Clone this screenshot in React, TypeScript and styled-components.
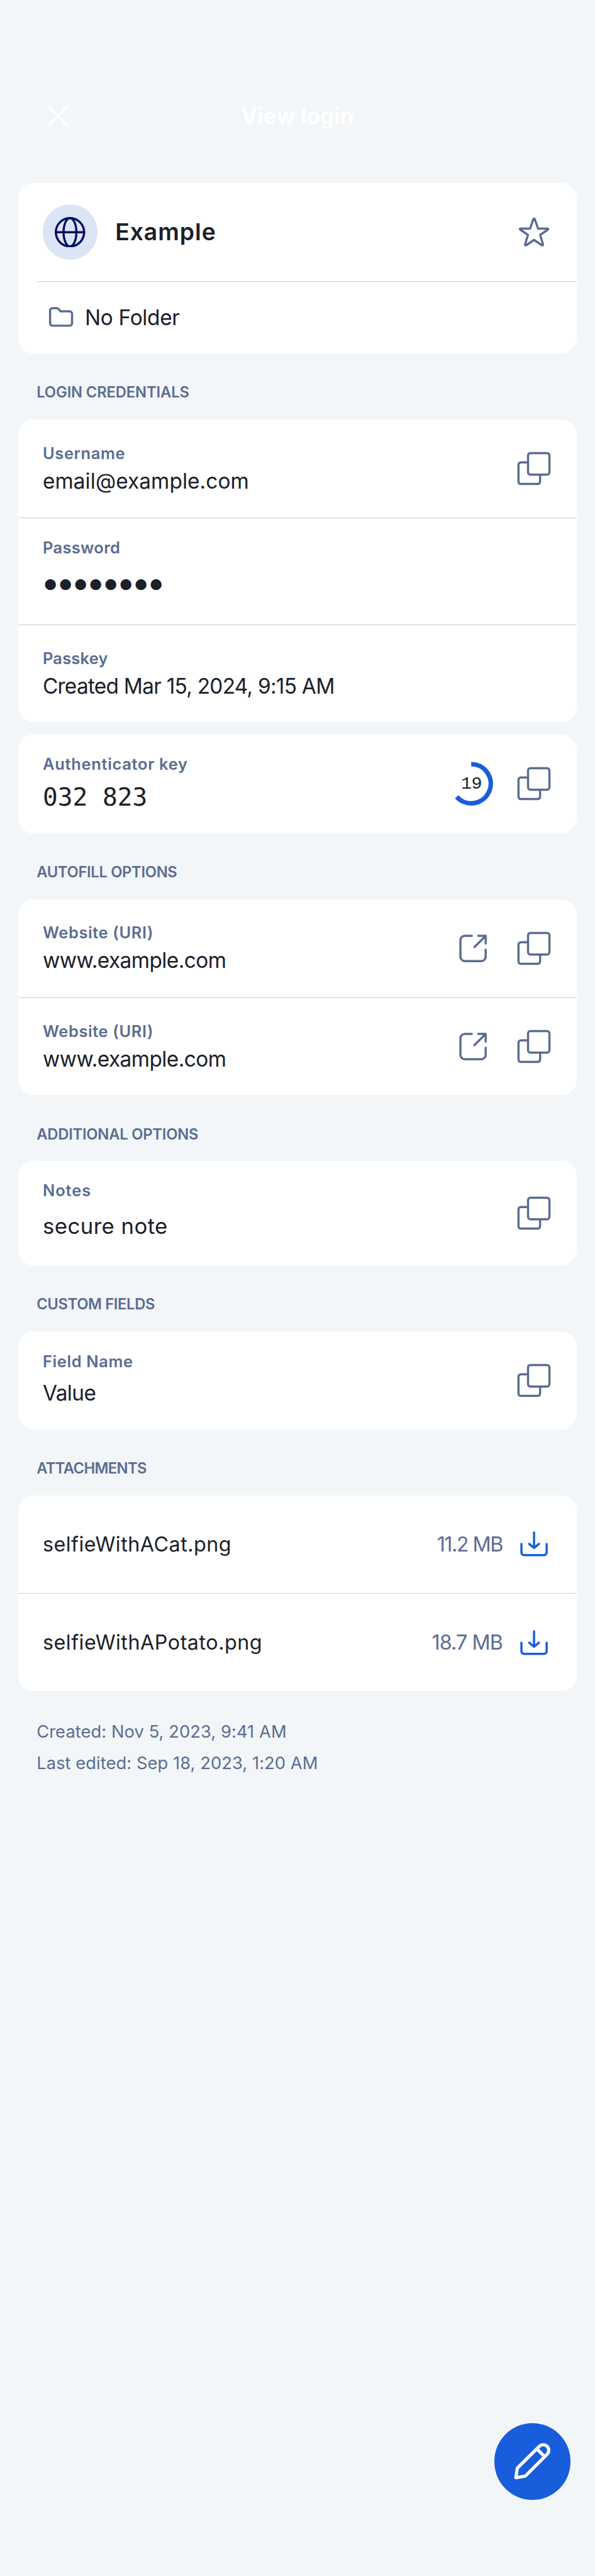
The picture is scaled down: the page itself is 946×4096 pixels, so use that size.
import React from "react";
import styled, { createGlobalStyle } from "styled-components";

/* Sizes are written in device pixels of a 1170px wide phone screen and scaled down. */
const SCALE = 0.8088;
const u = (n: number) => `${(n * SCALE).toFixed(2)}px`;

const color = {
  page: "#f2f6f9",
  card: "#ffffff",
  ink: "#1b2029",
  muted: "#5a6d91",
  blue: "#175ddc",
  navy: "#020f66",
  badge: "#dbe5f6",
  line: "#cfcfd1",
};

const GlobalStyle = createGlobalStyle`
  * { box-sizing: border-box; }
  html, body { margin: 0; background: ${color.page}; }
  body {
    font-family: Inter, "Liberation Sans", sans-serif;
    font-weight: 400;
    color: ${color.ink};
  }
`;

const Screen = styled.div`
  position: relative;
  height: 4096px;
  overflow: hidden;
  padding: 0 ${u(36)};
  background: ${color.page};
`;

const NavBar = styled.header`
  display: grid;
  grid-template-columns: 1fr auto 1fr;
  align-items: center;
  height: ${u(132)};
  margin: ${u(162)} 0 ${u(66)};
  padding: 0 ${u(55)};
  color: #ffffff;
`;

const NavTitle = styled.h1`
  margin: 0;
  font-size: ${u(43)};
  font-weight: 700;
  letter-spacing: 0.007em;
`;

const Icon = styled.svg<{ $size: number }>`
  display: block;
  flex: none;
  width: ${(p) => u(p.$size)};
  height: ${(p) => u(p.$size)};
  fill: none;
  stroke: currentColor;
  stroke-width: 4.3;
  stroke-linecap: round;
  stroke-linejoin: round;
`;

const Card = styled.section`
  margin-bottom: ${u(24)};
  border-radius: ${u(30)};
  background: ${color.card};
  overflow: hidden;

  &:has(+ h2),
  &:has(+ footer) {
    margin-bottom: 0;
  }
`;

const SectionTitle = styled.h2<{ $track: number }>`
  height: ${u(130)};
  margin: 0;
  padding: ${u(57.3)} 0 0 ${u(36)};
  font-size: ${u(29.4)};
  font-weight: 600;
  line-height: ${u(40)};
  letter-spacing: ${(p) => p.$track}em;
  color: ${color.muted};
`;

const Row = styled.div<{ $height: number }>`
  display: flex;
  align-items: center;
  height: ${(p) => u(p.$height)};
  padding: 0 ${u(48)};

  & + & {
    border-top: 1px solid ${color.line};
  }
`;

const TitleRow = styled(Row)`
  gap: ${u(34.5)};
`;

const FolderRow = styled(Row)`
  gap: ${u(11)};
  margin-left: ${u(36)};
  padding-left: ${u(12)};
`;

const Badge = styled.span`
  display: grid;
  place-items: center;
  width: ${u(108)};
  height: ${u(108)};
  border-radius: 50%;
  background: ${color.badge};
  color: ${color.navy};
`;

const ItemName = styled.strong`
  flex: 1;
  font-size: ${u(46.2)};
  font-weight: 600;
  letter-spacing: 0.0246em;
`;

const Text = styled.span<{ $track: number }>`
  flex: 1;
  font-size: ${u(41.3)};
  letter-spacing: ${(p) => p.$track}em;
  white-space: nowrap;
`;

const FileName = styled(Text)`
  font-size: ${u(40)};
`;

const FileSize = styled(FileName)`
  flex: none;
  margin-right: ${u(26)};
  color: ${color.muted};
`;

const Field = styled.div<{ $top: number }>`
  display: flex;
  flex: 1;
  flex-direction: column;
  align-self: flex-start;
  padding-top: ${(p) => u(p.$top)};
  white-space: nowrap;
`;

const Label = styled.span<{ $track: number }>`
  font-size: ${u(31.5)};
  font-weight: 600;
  line-height: ${u(36)};
  letter-spacing: ${(p) => p.$track}em;
  color: ${color.muted};
`;

const Value = styled.span<{ $gap?: number; $track?: number; $size?: number }>`
  margin-top: ${(p) => u(p.$gap ?? 12)};
  font-size: ${(p) => u(p.$size ?? 41.3)};
  line-height: ${u(50)};
  letter-spacing: ${(p) => p.$track ?? 0}em;
`;

const Dots = styled(Value)`
  font-family: "Liberation Mono", monospace;
`;

const Code = styled(Value)`
  font-family: "DejaVu Sans Mono", monospace;
`;

const Actions = styled.div<{ $gap?: number }>`
  display: flex;
  align-items: center;
  gap: ${(p) => u(p.$gap ?? 48)};
  color: ${color.muted};
`;

const Timer = styled.div`
  position: relative;
  display: grid;
  place-items: center;
  width: ${u(87)};
  height: ${u(87)};
  font-family: "Liberation Mono", monospace;
  font-size: ${u(35)};
  letter-spacing: -0.02em;
  color: ${color.ink};

  svg {
    position: absolute;
    inset: 0;
    color: ${color.blue};
    stroke-width: 9;
    stroke-linecap: butt;
  }
`;

const Download = styled(Icon)`
  color: ${color.blue};
`;

const Dates = styled.footer`
  padding: ${u(49)} 0 0 ${u(36)};
  font-size: ${u(33.8)};
  line-height: ${u(62)};
  letter-spacing: 0.002em;
  color: ${color.muted};

  p {
    margin: 0;
  }
`;

const EditButton = styled.button`
  position: absolute;
  right: ${u(48)};
  bottom: ${u(150)};
  width: ${u(150)};
  height: ${u(150)};
  padding: 0;
  border: 0;
  border-radius: 50%;
  background: ${color.blue};
  color: #ffffff;

  svg {
    stroke-width: 19;
  }
`;

const CopyIcon = () => (
  <Icon $size={72} viewBox="0 0 72 72">
    <rect x="24.2" y="5.6" width="42" height="42.2" rx="4.5" />
    <path d="M24.2 23.7H10a4.6 4.6 0 0 0-4.6 4.6V61.6a4.6 4.6 0 0 0 4.6 4.6H43.3a4.6 4.6 0 0 0 4.6-4.6V47.8" />
  </Icon>
);

const OpenIcon = () => (
  <Icon $size={72} viewBox="0 0 72 72">
    <path d="M33.5 11.2H19.8a8.6 8.6 0 0 0-8.6 8.6V52.2a8.6 8.6 0 0 0 8.6 8.6H52.2a8.6 8.6 0 0 0 8.6-8.6V38.2" />
    <path d="M46.2 11.2H60.8V26.4M38.8 33.2L60.4 11.6" />
  </Icon>
);

const DownloadIcon = () => (
  <Download $size={72} viewBox="0 0 72 72">
    <path d="M11.2 35.8V52.8a5 5 0 0 0 5 5H55.8a5 5 0 0 0 5-5V35.8M36 13.4V43.6M26.4 35.8L36 43.8L45.6 35.8" />
  </Download>
);

const websites = [0, 1];

const attachments = [
  { name: "selfieWithACat.png", track: 0.0147, size: "11.2 MB", sizeTrack: -0.0468 },
  { name: "selfieWithAPotato.png", track: 0.0153, size: "18.7 MB", sizeTrack: -0.0296 },
];

export default function App() {
  return (
    <Screen>
      <GlobalStyle />
      <NavBar>
        <Icon $size={45} viewBox="0 0 45 45">
          <path d="M2.2 2.2L42.8 42.8M42.8 2.2L2.2 42.8" />
        </Icon>
        <NavTitle>View login</NavTitle>
      </NavBar>

      <Card>
        <TitleRow $height={192.5}>
          <Badge>
            <Icon $size={60} viewBox="0 0 60 60">
              <circle cx="30" cy="30" r="27.8" />
              <ellipse cx="30" cy="30" rx="12.6" ry="27.8" />
              <path d="M2.2 30H57.8" />
            </Icon>
          </Badge>
          <ItemName>Example</ItemName>
          <Actions>
            <Icon $size={72} viewBox="-6 -7 72 72">
              <path d="M28.6 3.4Q30 1 31.4 3.4L37.8 22H56.5Q59.2 22.6 57 24.2L42 34.5L47.6 53.4Q47.4 55.8 45.4 54.8L30 44.4L14.6 54.8Q12.6 55.8 12.4 53.4L18 34.5L3 24.2Q0.8 22.6 3.5 22H22.2Z" />
            </Icon>
          </Actions>
        </TitleRow>
        <FolderRow $height={142.5}>
          <Actions>
            <Icon $size={72} viewBox="0 0 72 72">
              <path d="M14.4 22V47a4.8 4.8 0 0 0 4.8 4.8H52.8a4.8 4.8 0 0 0 4.8-4.8V28.3a4.8 4.8 0 0 0-4.8-4.8H35L31 19Q29.4 17.2 27 17.2H19.2A4.8 4.8 0 0 0 14.4 22Z" />
            </Icon>
          </Actions>
          <Text $track={-0.0102}>No Folder</Text>
        </FolderRow>
      </Card>

      <SectionTitle $track={-0.0058}>LOGIN CREDENTIALS</SectionTitle>
      <Card>
        <Row $height={192.5}>
          <Field $top={48}>
            <Label $track={0.0243}>Username</Label>
            <Value $track={0.002}>email@example.com</Value>
          </Field>
          <Actions>
            <CopyIcon />
          </Actions>
        </Row>
        <Row $height={210}>
          <Field $top={39.5}>
            <Label $track={0.0127}>Password</Label>
            <Dots $size={49.5} $gap={32.5}>●●●●●●●●</Dots>
          </Field>
        </Row>
        <Row $height={192.5}>
          <Field $top={47.5}>
            <Label $track={0.0079}>Passkey</Label>
            <Value $track={-0.0223}>Created Mar 15, 2024, 9:15 AM</Value>
          </Field>
        </Row>
      </Card>
      <Card>
        <Row $height={194}>
          <Field $top={39.5}>
            <Label $track={0.027}>Authenticator key</Label>
            <Code $size={48.8} $gap={22}>032 823</Code>
          </Field>
          <Actions $gap={43.5}>
            <Timer>
              <Icon $size={87} viewBox="0 0 87 87">
                <path d="M43.5 5A38.5 38.5 0 1 1 14.9 69.3" />
              </Icon>
              19
            </Timer>
            <CopyIcon />
          </Actions>
        </Row>
      </Card>

      <SectionTitle $track={-0.014}>AUTOFILL OPTIONS</SectionTitle>
      <Card>
        {websites.map((id) => (
          <Row key={id} $height={192.5}>
            <Field $top={47.5}>
              <Label $track={0.0239}>Website (URI)</Label>
              <Value $track={-0.0171}>www.example.com</Value>
            </Field>
            <Actions>
              <OpenIcon />
              <CopyIcon />
            </Actions>
          </Row>
        ))}
      </Card>

      <SectionTitle $track={-0.0096}>ADDITIONAL OPTIONS</SectionTitle>
      <Card>
        <Row $height={205}>
          <Field $top={39.5}>
            <Label $track={0.0354}>Notes</Label>
            <Value $size={43} $gap={26.5} $track={0.012}>secure note</Value>
          </Field>
          <Actions>
            <CopyIcon />
          </Actions>
        </Row>
      </Card>

      <SectionTitle $track={-0.0154}>CUSTOM FIELDS</SectionTitle>
      <Card>
        <Row $height={192}>
          <Field $top={40.5}>
            <Label $track={0.0244}>Field Name</Label>
            <Value $gap={19.5} $track={-0.0182}>Value</Value>
          </Field>
          <Actions>
            <CopyIcon />
          </Actions>
        </Row>
      </Card>

      <SectionTitle $track={-0.0264}>ATTACHMENTS</SectionTitle>
      <Card>
        {attachments.map((file) => (
          <Row key={file.name} $height={192.5}>
            <FileName $track={file.track}>{file.name}</FileName>
            <FileSize $track={file.sizeTrack}>{file.size}</FileSize>
            <DownloadIcon />
          </Row>
        ))}
      </Card>

      <Dates>
        <p>Created: Nov 5, 2023, 9:41 AM</p>
        <p>Last edited: Sep 18, 2023, 1:20 AM</p>
      </Dates>

      <EditButton aria-label="Edit">
        <Icon $size={150} viewBox="96 101 450 450">
          <path d="M222.5 422.5L231.5 366L361.7 236.7A33 33 0 0 1 408.3 283.3L279 412.5ZM346.5 252.5L392.5 298.5" />
        </Icon>
      </EditButton>
    </Screen>
  );
}
